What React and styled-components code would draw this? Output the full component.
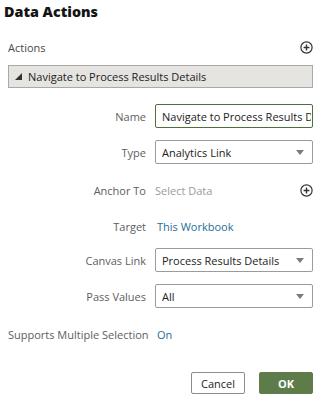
import styled, { createGlobalStyle } from 'styled-components';

const GlobalStyle = createGlobalStyle`
  body {
    margin: 0;
    background: #fff;
    font-family: "Open Sans", "Noto Sans", sans-serif;
    color: #333;
  }
`;

const Panel = styled.div`
  width: 322px;
  height: 403px;
  box-sizing: border-box;
  padding: 0 9px 0 8px;
  display: flex;
  flex-direction: column;
`;

const Title = styled.h1`
  margin: 1px 0 0 -4px;
  font-size: 14.3px;
  font-weight: 800;
  line-height: 22px;
  color: #141414;
`;

const SectionRow = styled.div`
  margin-top: 14px;
  height: 20px;
  display: flex;
  align-items: center;
  justify-content: space-between;
  font-size: 11px;
  color: #4a4a4a;
`;

const AccordionHeader = styled.div`
  margin-top: 8px;
  height: 23px;
  box-sizing: border-box;
  border: 1px solid #a9a9a9;
  background: #e5e4e1;
  display: flex;
  align-items: center;
  gap: 6px;
  padding-left: 6px;
  font-size: 11px;
  color: #222;
`;

const Form = styled.div`
  margin-top: 16px;
  display: grid;
  grid-template-columns: 138px 1fr;
  grid-template-rows: 24px 24px 28px 20px 24px 24px 28px;
  column-gap: 9px;
  row-gap: 12px;
  align-items: center;
`;

const Label = styled.div`
  font-size: 11px;
  color: #5e5e5e;
  text-align: right;
  white-space: nowrap;
`;

const Field = styled.div`
  height: 24px;
  box-sizing: border-box;
  border: 1px solid ${({ $focused }) => ($focused ? '#4e6e3c' : '#9b9b9b')};
  border-radius: 2px;
  background: #fff;
  display: flex;
  align-items: center;
  padding: 0 ${({ $focused }) => ($focused ? 1 : 8)}px 0 6px;
  font-size: 11px;
  color: #222;
  overflow: hidden;
  white-space: nowrap;
`;

const FieldText = styled.span`
  flex: 1;
  overflow: hidden;
`;

const Arrow = styled.span`
  width: 0;
  height: 0;
  border-left: 4px solid transparent;
  border-right: 4px solid transparent;
  border-top: 5px solid #7b7b7b;
`;

const Value = styled.div`
  display: flex;
  align-items: center;
  justify-content: space-between;
  font-size: 11px;
  color: ${({ $muted }) => ($muted ? '#9a9a9a' : '#1f6e94')};
  padding-left: ${({ $indent }) => $indent || 0}px;
`;

const Footer = styled.div`
  margin-top: 24px;
  display: flex;
  justify-content: flex-end;
  gap: 14px;
`;

const Button = styled.button`
  width: 54px;
  height: 22px;
  box-sizing: border-box;
  border-radius: 2px;
  font-family: inherit;
  font-size: 11px;
  padding: 0;
  border: 1px solid ${({ $primary }) => ($primary ? '#5e7b4a' : '#8c8c8c')};
  background: ${({ $primary }) => ($primary ? '#5e7b4a' : '#fff')};
  color: ${({ $primary }) => ($primary ? '#fff' : '#222')};
  font-weight: ${({ $primary }) => ($primary ? 700 : 400)};
`;

const AddIcon = () => (
  <svg width="13" height="13" viewBox="0 0 13 13">
    <circle cx="6.5" cy="6.5" r="5.6" fill="none" stroke="#333" strokeWidth="1.2" />
    <path d="M6.5 3.6v5.8M3.6 6.5h5.8" stroke="#333" strokeWidth="1.4" />
  </svg>
);

const Expanded = () => (
  <svg width="7" height="7" viewBox="0 0 7 7">
    <polygon points="7,0 7,7 0,7" fill="#333" />
  </svg>
);

const Select = ({ children }) => (
  <Field>
    <FieldText>{children}</FieldText>
    <Arrow />
  </Field>
);

export default function App() {
  return (
    <>
      <GlobalStyle />
      <Panel>
        <Title>Data Actions</Title>
        <SectionRow>
          Actions
          <AddIcon />
        </SectionRow>
        <AccordionHeader>
          <Expanded />
          Navigate to Process Results Details
        </AccordionHeader>
        <Form>
          <Label>Name</Label>
          <Field $focused>
            <FieldText>Navigate to Process Results Details</FieldText>
          </Field>

          <Label>Type</Label>
          <Select>Analytics Link</Select>

          <Label>Anchor To</Label>
          <Value $muted>
            Select Data
            <AddIcon />
          </Value>

          <Label>Target</Label>
          <Value $indent={2}>This Workbook</Value>

          <Label>Canvas Link</Label>
          <Select>Process Results Details</Select>

          <Label>Pass Values</Label>
          <Select>All</Select>

          <Label>Supports Multiple Selection</Label>
          <Value $indent={2}>On</Value>
        </Form>
        <Footer>
          <Button>Cancel</Button>
          <Button $primary>OK</Button>
        </Footer>
      </Panel>
    </>
  );
}
